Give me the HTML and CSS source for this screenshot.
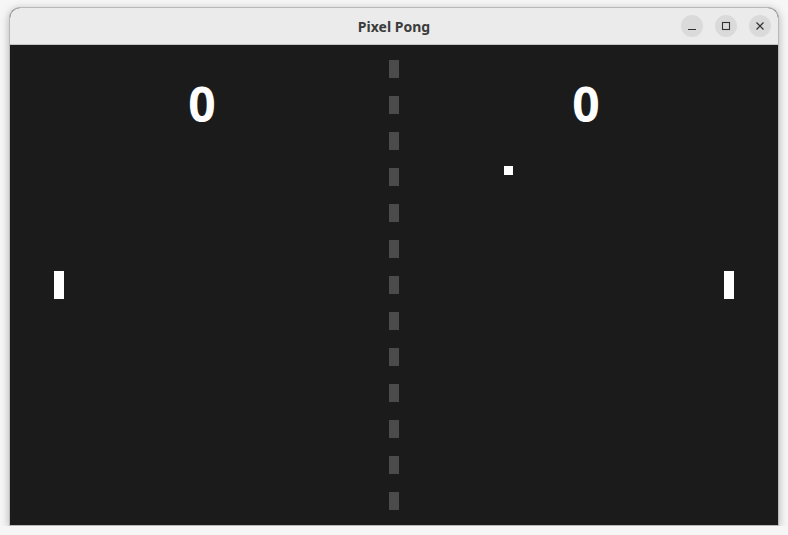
FILE: index.html
```html
<!DOCTYPE html>
<html>
<head>
<meta charset="utf-8">
<title>Pixel Pong</title>
<link rel="stylesheet" href="styles.css">
</head>
<body>
<div class="window">
  <div class="titlebar">
    <div class="title">Pixel Pong</div>
    <div class="controls">
      <button class="ctl" aria-label="Minimize"><svg width="10" height="10" viewBox="0 0 10 10"><path d="M1 8.5H9" stroke="#333" stroke-width="1.2"/></svg></button>
      <button class="ctl" aria-label="Maximize"><svg width="10" height="10" viewBox="0 0 10 10"><rect x="1.5" y="1.5" width="7" height="7" fill="none" stroke="#333" stroke-width="1.1"/></svg></button>
      <button class="ctl" aria-label="Close"><svg width="10" height="10" viewBox="0 0 10 10"><path d="M1.5 1.5L8.5 8.5M8.5 1.5L1.5 8.5" stroke="#333" stroke-width="1.2"/></svg></button>
    </div>
  </div>
  <div class="court">
    <div class="score score-left">0</div>
    <div class="score score-right">0</div>
    <div class="net">
      <span></span><span></span><span></span><span></span><span></span><span></span><span></span><span></span><span></span><span></span><span></span><span></span><span></span>
    </div>
    <div class="paddle paddle-left"></div>
    <div class="paddle paddle-right"></div>
    <div class="ball"></div>
  </div>
</div>
</body>
</html>
```
FILE: styles.css
```css
html, body {
  margin: 0;
  padding: 0;
  background: #f6f6f6;
}
body {
  padding: 7px 9px 0 9px;
  width: 770px;
}
.window {
  width: 768px;
  border: 1px solid #b9b9b9;
  border-radius: 11px 11px 0 0;
  overflow: hidden;
  box-shadow: 0 2px 9px rgba(0, 0, 0, 0.28);
  background: #1b1b1b;
}
.titlebar {
  height: 36px;
  background: #ebebeb;
  border-bottom: 1px solid #c4c4c4;
  display: flex;
  align-items: center;
  justify-content: center;
  position: relative;
}
.title {
  font-family: "Noto Sans", "DejaVu Sans", sans-serif;
  font-weight: bold;
  font-size: 14px;
  color: #3c3c3c;
}
.controls {
  position: absolute;
  right: 7px;
  top: 7px;
  display: flex;
  gap: 12px;
}
.ctl {
  width: 22px;
  height: 22px;
  border-radius: 50%;
  border: none;
  background: #dadada;
  padding: 0;
  display: flex;
  align-items: center;
  justify-content: center;
}
.court {
  position: relative;
  height: 480px;
  background: #1b1b1b;
}
.score {
  position: absolute;
  top: 31px;
  width: 80px;
  text-align: center;
  font-family: "Noto Sans", "DejaVu Sans", sans-serif;
  font-weight: bold;
  font-size: 48px;
  line-height: 56px;
  color: #ffffff;
}
.score-left { left: 152px; }
.score-right { left: 536px; }
.net {
  position: absolute;
  left: 379px;
  top: 15px;
  width: 10px;
  display: flex;
  flex-direction: column;
  gap: 18px;
}
.net span {
  display: block;
  width: 10px;
  height: 18px;
  background: #4b4b4b;
}
.paddle {
  position: absolute;
  top: 226px;
  width: 10px;
  height: 28px;
  background: #ffffff;
}
.paddle-left { left: 44px; }
.paddle-right { left: 714px; }
.ball {
  position: absolute;
  left: 494px;
  top: 121px;
  width: 9px;
  height: 9px;
  background: #ffffff;
}
```
